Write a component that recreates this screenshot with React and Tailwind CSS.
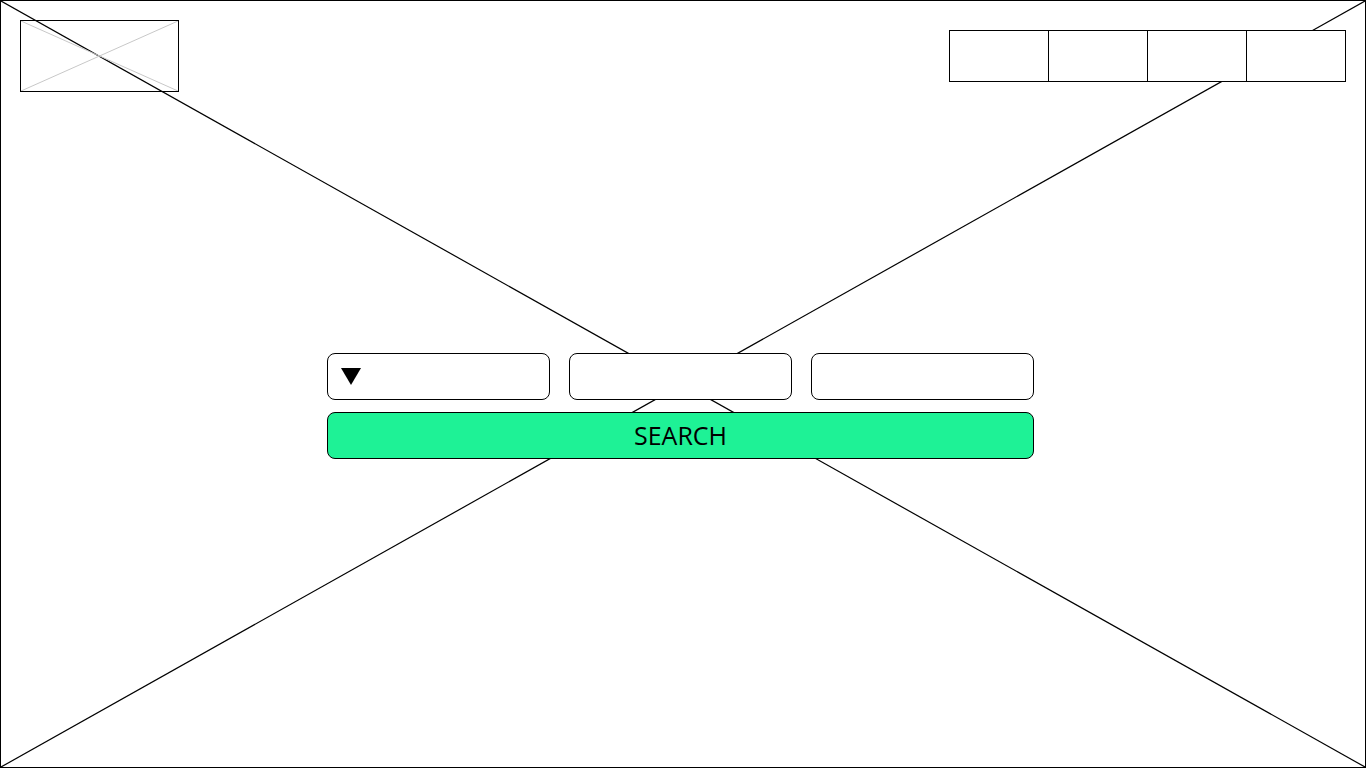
export default function App() {
  return (
    <div className="relative h-[768px] w-[1366px] overflow-hidden border border-black bg-white" style={{ fontFamily: '"Open Sans", "Liberation Sans", sans-serif' }}>
      {/* background placeholder cross */}
      <svg className="absolute inset-0 h-full w-full" viewBox="0 0 1364 766" preserveAspectRatio="none">
        <line x1="0" y1="0" x2="1364" y2="766" stroke="#000" strokeWidth="1.2" />
        <line x1="1364" y1="0" x2="0" y2="766" stroke="#000" strokeWidth="1.2" />
      </svg>

      <div className="relative flex flex-col">
        {/* Header */}
        <div className="flex items-start justify-between pl-[19px] pr-[19px] pt-[19px]">
          <div className="relative h-[72px] w-[159px] border border-black">
            <svg className="absolute inset-0 h-full w-full" viewBox="0 0 157 70" preserveAspectRatio="none">
              <line x1="0" y1="0" x2="157" y2="70" stroke="#c8c8c8" strokeWidth="1" />
              <line x1="157" y1="0" x2="0" y2="70" stroke="#c8c8c8" strokeWidth="1" />
            </svg>
          </div>
          <div className="mt-[10px] flex">
            {[0, 1, 2, 3].map(i => (
              <div key={i}
                className={`h-[52px] w-[100px] border border-black bg-white ${i > 0 ? '-ml-px' : ''}`} />
            ))}
          </div>
        </div>

        {/* Search form */}
        <div className="ml-[326px] mt-[261px] flex w-[707px] flex-col gap-[12px]">
          <div className="flex gap-[19px]">
            <div className="flex h-[47px] w-[223px] items-center rounded-[8px] border border-black bg-white pl-[13px]">
              <svg width="20" height="17" viewBox="0 0 20 17">
                <polygon points="0,0 20,0 10,17" fill="#000" />
              </svg>
            </div>
            <div className="h-[47px] w-[223px] rounded-[8px] border border-black bg-white" />
            <div className="h-[47px] w-[223px] rounded-[8px] border border-black bg-white" />
          </div>
          <button className="flex h-[47px] w-[707px] items-center justify-center rounded-[8px] border border-black bg-[#1ef296] text-[25px] leading-none text-black">
            SEARCH
          </button>
        </div>
      </div>
    </div>
  )
}
